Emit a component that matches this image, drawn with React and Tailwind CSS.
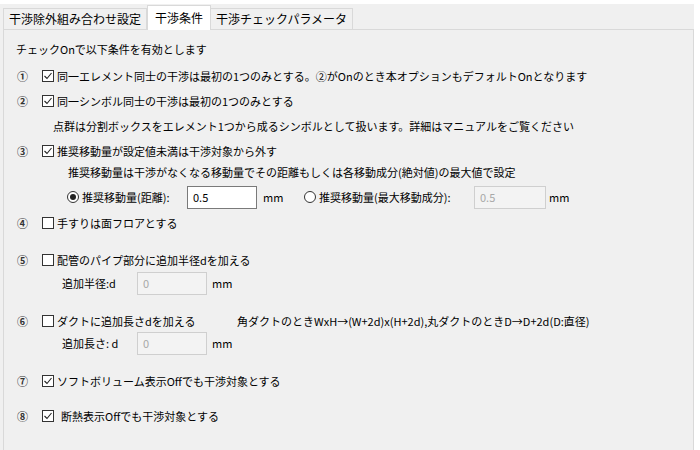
import React from 'react';

const font = { fontFamily: '"Noto Sans CJK JP", "Noto Sans", sans-serif' };

// チェックボックス
const Check = ({ checked }) => (
  <span className="w-[12px] h-[12px] border border-[#333] bg-white flex items-center justify-center shrink-0">
    {checked && (
      <svg width="10" height="10" viewBox="0 0 10 10">
        <path d="M1.5 5 L4 7.5 L8.5 2" fill="none" stroke="#222" strokeWidth="1.1" />
      </svg>
    )}
  </span>
);

const Radio = ({ checked }) => (
  <span className="w-[12px] h-[12px] rounded-full border border-[#333] bg-white flex items-center justify-center shrink-0">
    {checked && <span className="w-[6px] h-[6px] rounded-full bg-[#222]" />}
  </span>
);

const Num = ({ n }) => (
  <span className="w-[25px] text-[11px] font-bold text-[#333] shrink-0">{n}</span>
);

const Item = ({ n, checked, children, mt, gap = 'ml-[3px]' }) => (
  <div className={`flex items-center h-[20px] pl-[13px] ${mt}`}>
    <Num n={n} />
    <Check checked={checked} />
    <span className={gap}>{children}</span>
  </div>
);

const Field = ({ value, disabled, w }) => (
  <div
    className={`h-[23px] ${w} border flex items-center px-[5px] text-[11px] shrink-0 ${
      disabled ? 'border-[#cfcfcf] bg-[#f3f3f3] text-[#a8a8a8]' : 'border-[#7a7a7a] bg-white text-black'
    }`}
  >
    {value}
  </div>
);

export default function App() {
  return (
    <div className="w-[700px] h-[450px] bg-white text-black text-[11px] overflow-hidden" style={font}>
      <div className="w-[694px] h-[447px] mt-[4px] bg-[#f0f0f0] flex flex-col">
        {/* タブ */}
        <div className="flex items-end h-[25px] pl-[3px] text-[12px]">
          <div className="h-[21px] px-[5px] flex items-center border border-b-0 border-[#d9d9d9] bg-[#f0f0f0]">
            干渉除外組み合わせ設定
          </div>
          <div className="h-[25px] px-[7px] flex items-center border border-b-0 border-[#d9d9d9] bg-white -mb-[1px] relative z-10">
            干渉条件
          </div>
          <div className="h-[21px] px-[5px] flex items-center border border-b-0 border-l-0 border-[#d9d9d9] bg-[#f0f0f0]">
            干渉チェックパラメータ
          </div>
        </div>

        {/* パネル */}
        <div className="flex-1 ml-[3px] border border-[#d9d9d9] bg-[#f0f0f0] flex flex-col pt-[9px]">
          <div className="flex items-center h-[20px] pl-[12px]">チェックOnで以下条件を有効とします</div>

          <Item n="①" checked mt="mt-[7px]">
            同一エレメント同士の干渉は最初の1つのみとする。②がOnのとき本オプションもデフォルトOnとなります
          </Item>
          <Item n="②" checked mt="mt-[5px]">
            同一シンボル同士の干渉は最初の1つのみとする
          </Item>
          <div className="flex items-center h-[20px] pl-[49px] mt-[5px]">
            点群は分割ボックスをエレメント1つから成るシンボルとして扱います。詳細はマニュアルをご覧ください
          </div>
          <Item n="③" checked mt="mt-[5px]">
            推奨移動量が設定値未満は干渉対象から外す
          </Item>
          <div className="flex items-center h-[20px] pl-[64px] mt-[1px]">
            推奨移動量は干渉がなくなる移動量でその距離もしくは各移動成分(絶対値)の最大値で設定
          </div>
          <div className="flex items-center h-[20px] pl-[63px] mt-[5px]">
            <Radio checked />
            <span className="ml-[3px] w-[105px] shrink-0">推奨移動量(距離):</span>
            <Field value="0.5" w="w-[70px]" />
            <span className="ml-[6px] w-[41px] shrink-0">mm</span>
            <Radio />
            <span className="ml-[3px] w-[155px] shrink-0">推奨移動量(最大移動成分):</span>
            <Field value="0.5" disabled w="w-[72px]" />
            <span className="ml-[3px]">mm</span>
          </div>
          <Item n="④" mt="mt-[6px]">
            手すりは面フロアとする
          </Item>

          <Item n="⑤" mt="mt-[17px]">
            配管のパイプ部分に追加半径dを加える
          </Item>
          <div className="flex items-center h-[20px] pl-[58px] mt-[3px]">
            <span className="w-[75px] shrink-0">追加半径:d</span>
            <Field value="0" disabled w="w-[70px]" />
            <span className="ml-[5px]">mm</span>
          </div>

          <div className="flex items-center h-[20px] pl-[13px] mt-[18px]">
            <Num n="⑥" />
            <Check />
            <span className="ml-[3px] w-[180px] shrink-0">ダクトに追加長さdを加える</span>
            <span>角ダクトのときWxH→(W+2d)x(H+2d),丸ダクトのときD→D+2d(D:直径)</span>
          </div>
          <div className="flex items-center h-[20px] pl-[58px] mt-[2px]">
            <span className="w-[75px] shrink-0">追加長さ: d</span>
            <Field value="0" disabled w="w-[70px]" />
            <span className="ml-[5px]">mm</span>
          </div>

          <Item n="⑦" checked mt="mt-[18px]">
            ソフトボリューム表示Offでも干渉対象とする
          </Item>
          <Item n="⑧" checked mt="mt-[15px]" gap="ml-[7px]">
            断熱表示Offでも干渉対象とする
          </Item>
        </div>
      </div>
    </div>
  );
}
